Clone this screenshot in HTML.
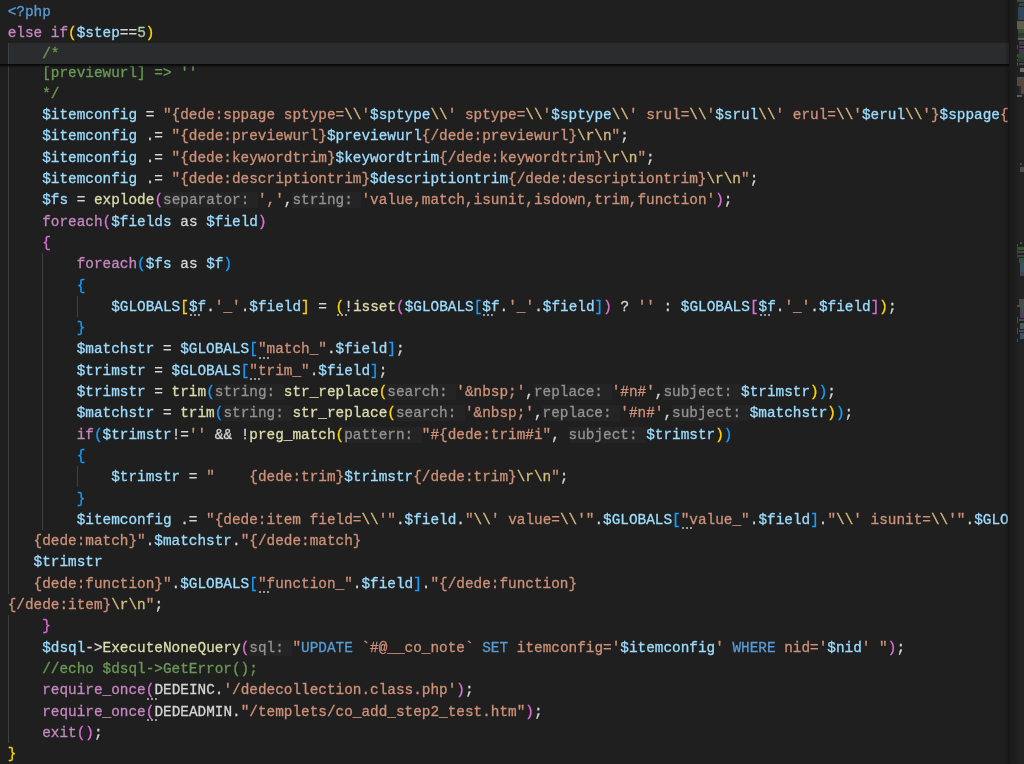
<!DOCTYPE html>
<html><head><meta charset="utf-8"><style>
*{margin:0;padding:0;box-sizing:border-box}
html,body{width:1024px;height:764px;overflow:hidden;background:#1f1f1f}
#ed{position:absolute;left:0;top:0;width:1009px;height:764px;overflow:hidden;background:#1f1f1f;filter:blur(0.35px)}
.l{position:absolute;left:7.7px;height:21.3px;line-height:21.3px;white-space:pre;font-family:"Liberation Mono",monospace;font-size:14.38px;color:#d4d4d4;padding-top:1px;-webkit-text-stroke:0.3px currentColor}
.k{color:#c586c0}.v{color:#9cdcfe}.f{color:#dcdcaa}.s{color:#ce9178}.c{color:#6a9955}.o{color:#d4d4d4}
.t{color:#569cd6}.n{color:#b5cea8}.e{color:#d7ba7d}.b1{color:#ffd700}.b2{color:#da70d6}.b3{color:#179fff}
.h{color:#929292;background:#242424}
.g{position:absolute;width:1px;height:21.3px;background:#404040}
.d{position:absolute;width:12px;height:2px;background:radial-gradient(circle at 2px 1px,#9a9a9a 1px,transparent 1.2px) 0 0/4px 2px repeat-x}
.sw{position:absolute;left:0;top:0;width:1009px;height:63.900000000000006px;background:#1f1f1f}
.hov{position:absolute;left:8px;top:42.6px;width:1001px;height:21.3px;background:#2b2c2e}
.shadow{position:absolute;left:0;top:63.900000000000006px;width:1009px;height:4px;background:linear-gradient(#070707 0,#0c0c0c 1.2px,rgba(15,15,15,0.5) 2.2px,rgba(31,31,31,0) 4px)}
#sb{position:absolute;left:1004px;top:0;width:6px;height:764px;background:linear-gradient(to right,rgba(0,0,0,0),rgba(0,0,0,0.12) 40%,rgba(0,0,0,0.3))}
#mm{position:absolute;left:1010px;top:0;width:14px;height:764px;background:linear-gradient(to right,#1c1c1c 0,#1d1d1d 6px,#212121 7px);filter:blur(0.6px)}
</style></head><body>
<div id="ed">
<div class="g" style="left:8px;top:61.50px;height:532.50px"></div>
<div class="g" style="left:8px;top:615.30px;height:127.80px"></div>
<div class="g" style="left:42px;top:253.20px;height:276.90px"></div>
<div class="g" style="left:77px;top:295.80px;height:21.30px"></div>
<div class="g" style="left:77px;top:466.20px;height:21.30px"></div>
<div class="l" style="top:61.50px"><span class="c">    [previewurl] =&gt; ''</span></div>
<div class="l" style="top:82.80px"><span class="c">    */</span></div>
<div class="l" style="top:104.10px"><span class="o">    </span><span class="v">$itemconfig</span><span class="o"> = </span><span class="s">"{dede:sppage sptype=</span><span class="e">\\</span><span class="s">'</span><span class="v">$sptype</span><span class="e">\\</span><span class="s">' sptype=</span><span class="e">\\</span><span class="s">'</span><span class="v">$sptype</span><span class="e">\\</span><span class="s">' srul=</span><span class="e">\\</span><span class="s">'</span><span class="v">$srul</span><span class="e">\\</span><span class="s">' erul=</span><span class="e">\\</span><span class="s">'</span><span class="v">$erul</span><span class="e">\\</span><span class="s">'}</span><span class="v">$sppage</span><span class="s">{dede:sppage}</span></div>
<div class="l" style="top:125.40px"><span class="o">    </span><span class="v">$itemconfig</span><span class="o"> .= </span><span class="s">"{dede:previewurl}</span><span class="v">$previewurl</span><span class="s">{/dede:previewurl}</span><span class="e">\r\n</span><span class="s">"</span><span class="o">;</span></div>
<div class="l" style="top:146.70px"><span class="o">    </span><span class="v">$itemconfig</span><span class="o"> .= </span><span class="s">"{dede:keywordtrim}</span><span class="v">$keywordtrim</span><span class="s">{/dede:keywordtrim}</span><span class="e">\r\n</span><span class="s">"</span><span class="o">;</span></div>
<div class="l" style="top:168.00px"><span class="o">    </span><span class="v">$itemconfig</span><span class="o"> .= </span><span class="s">"{dede:descriptiontrim}</span><span class="v">$descriptiontrim</span><span class="s">{/dede:descriptiontrim}</span><span class="e">\r\n</span><span class="s">"</span><span class="o">;</span></div>
<div class="l" style="top:189.30px"><span class="o">    </span><span class="v">$fs</span><span class="o"> = </span><span class="f">explode</span><span class="b2">(</span><span class="h">separator: </span><span class="s">','</span><span class="o">,</span><span class="h">string: </span><span class="s">'value,match,isunit,isdown,trim,function'</span><span class="b2">)</span><span class="o">;</span></div>
<div class="l" style="top:210.60px"><span class="o">    </span><span class="k">foreach</span><span class="b2">(</span><span class="v">$fields</span><span class="o"> as </span><span class="v">$field</span><span class="b2">)</span></div>
<div class="l" style="top:231.90px"><span class="o">    </span><span class="b2">{</span></div>
<div class="l" style="top:253.20px"><span class="o">        </span><span class="k">foreach</span><span class="b3">(</span><span class="v">$fs</span><span class="o"> as </span><span class="v">$f</span><span class="b3">)</span></div>
<div class="l" style="top:274.50px"><span class="o">        </span><span class="b3">{</span></div>
<div class="l" style="top:295.80px"><span class="o">            </span><span class="v">$GLOBALS</span><span class="b1">[</span><span class="v">$f</span><span class="o">.</span><span class="s">'_'</span><span class="o">.</span><span class="v">$field</span><span class="b1">]</span><span class="o"> = </span><span class="b1">(</span><span class="o">!</span><span class="f">isset</span><span class="b2">(</span><span class="v">$GLOBALS</span><span class="b3">[</span><span class="v">$f</span><span class="o">.</span><span class="s">'_'</span><span class="o">.</span><span class="v">$field</span><span class="b3">]</span><span class="b2">)</span><span class="o"> ? </span><span class="s">''</span><span class="o"> : </span><span class="v">$GLOBALS</span><span class="b2">[</span><span class="v">$f</span><span class="o">.</span><span class="s">'_'</span><span class="o">.</span><span class="v">$field</span><span class="b2">]</span><span class="b1">)</span><span class="o">;</span></div>
<div class="l" style="top:317.10px"><span class="o">        </span><span class="b3">}</span></div>
<div class="l" style="top:338.40px"><span class="o">        </span><span class="v">$matchstr</span><span class="o"> = </span><span class="v">$GLOBALS</span><span class="b3">[</span><span class="s">"match_"</span><span class="o">.</span><span class="v">$field</span><span class="b3">]</span><span class="o">;</span></div>
<div class="l" style="top:359.70px"><span class="o">        </span><span class="v">$trimstr</span><span class="o"> = </span><span class="v">$GLOBALS</span><span class="b3">[</span><span class="s">"trim_"</span><span class="o">.</span><span class="v">$field</span><span class="b3">]</span><span class="o">;</span></div>
<div class="l" style="top:381.00px"><span class="o">        </span><span class="v">$trimstr</span><span class="o"> = </span><span class="f">trim</span><span class="b3">(</span><span class="h">string: </span><span class="f">str_replace</span><span class="b1">(</span><span class="h">search: </span><span class="s">'&amp;nbsp;'</span><span class="o">,</span><span class="h">replace: </span><span class="s">'#n#'</span><span class="o">,</span><span class="h">subject: </span><span class="v">$trimstr</span><span class="b1">)</span><span class="b3">)</span><span class="o">;</span></div>
<div class="l" style="top:402.30px"><span class="o">        </span><span class="v">$matchstr</span><span class="o"> = </span><span class="f">trim</span><span class="b3">(</span><span class="h">string: </span><span class="f">str_replace</span><span class="b1">(</span><span class="h">search: </span><span class="s">'&amp;nbsp;'</span><span class="o">,</span><span class="h">replace: </span><span class="s">'#n#'</span><span class="o">,</span><span class="h">subject: </span><span class="v">$matchstr</span><span class="b1">)</span><span class="b3">)</span><span class="o">;</span></div>
<div class="l" style="top:423.60px"><span class="o">        </span><span class="k">if</span><span class="b3">(</span><span class="v">$trimstr</span><span class="o">!=</span><span class="s">''</span><span class="o"> &amp;&amp; !</span><span class="f">preg_match</span><span class="b1">(</span><span class="h">pattern: </span><span class="s">"#{dede:trim#i"</span><span class="o">, </span><span class="h">subject: </span><span class="v">$trimstr</span><span class="b1">)</span><span class="b3">)</span></div>
<div class="l" style="top:444.90px"><span class="o">        </span><span class="b3">{</span></div>
<div class="l" style="top:466.20px"><span class="o">            </span><span class="v">$trimstr</span><span class="o"> = </span><span class="s">"    {dede:trim}</span><span class="v">$trimstr</span><span class="s">{/dede:trim}</span><span class="e">\r\n</span><span class="s">"</span><span class="o">;</span></div>
<div class="l" style="top:487.50px"><span class="o">        </span><span class="b3">}</span></div>
<div class="l" style="top:508.80px"><span class="o">        </span><span class="v">$itemconfig</span><span class="o"> .= </span><span class="s">"{dede:item field=</span><span class="e">\\</span><span class="s">'"</span><span class="o">.</span><span class="v">$field</span><span class="o">.</span><span class="s">"</span><span class="e">\\</span><span class="s">' value=</span><span class="e">\\</span><span class="s">'"</span><span class="o">.</span><span class="v">$GLOBALS</span><span class="b3">[</span><span class="s">"value_"</span><span class="o">.</span><span class="v">$field</span><span class="b3">]</span><span class="o">.</span><span class="s">"</span><span class="e">\\</span><span class="s">' isunit=</span><span class="e">\\</span><span class="s">'"</span><span class="o">.</span><span class="v">$GLOBALS</span><span class="b3">[</span><span class="s">"isunit_"</span></div>
<div class="l" style="top:530.10px"><span class="s">   {dede:match}"</span><span class="o">.</span><span class="v">$matchstr</span><span class="o">.</span><span class="s">"{/dede:match}</span></div>
<div class="l" style="top:551.40px"><span class="s">   </span><span class="v">$trimstr</span></div>
<div class="l" style="top:572.70px"><span class="s">   {dede:function}"</span><span class="o">.</span><span class="v">$GLOBALS</span><span class="b3">[</span><span class="s">"function_"</span><span class="o">.</span><span class="v">$field</span><span class="b3">]</span><span class="o">.</span><span class="s">"{/dede:function}</span></div>
<div class="l" style="top:594.00px"><span class="s">{/dede:item}</span><span class="e">\r\n</span><span class="s">"</span><span class="o">;</span></div>
<div class="l" style="top:615.30px"><span class="o">    </span><span class="b2">}</span></div>
<div class="l" style="top:636.60px"><span class="o">    </span><span class="v">$dsql</span><span class="o">-&gt;</span><span class="f">ExecuteNoneQuery</span><span class="b2">(</span><span class="h">sql: </span><span class="s">"</span><span class="t">UPDATE</span><span class="s"> `#@__co_note` </span><span class="t">SET</span><span class="s"> itemconfig='</span><span class="v">$itemconfig</span><span class="s">' </span><span class="t">WHERE</span><span class="s"> nid='</span><span class="v">$nid</span><span class="s">' "</span><span class="b2">)</span><span class="o">;</span></div>
<div class="l" style="top:657.90px"><span class="c">    //echo $dsql-&gt;GetError();</span></div>
<div class="l" style="top:679.20px"><span class="o">    </span><span class="k">require_once</span><span class="b2">(</span><span class="o">DEDEINC.</span><span class="s">'/dedecollection.class.php'</span><span class="b2">)</span><span class="o">;</span></div>
<div class="l" style="top:700.50px"><span class="o">    </span><span class="k">require_once</span><span class="b2">(</span><span class="o">DEDEADMIN.</span><span class="s">"/templets/co_add_step2_test.htm"</span><span class="b2">)</span><span class="o">;</span></div>
<div class="l" style="top:721.80px"><span class="o">    </span><span class="k">exit</span><span class="b2">(</span><span class="b2">)</span><span class="o">;</span></div>
<div class="l" style="top:743.10px"><span class="b1">}</span></div>
<div class="d" style="left:188.93px;top:314.10px"></div>
<div class="d" style="left:335.64px;top:314.10px"></div>
<div class="d" style="left:482.35px;top:314.10px"></div>
<div class="d" style="left:758.51px;top:314.10px"></div>
<div class="d" style="left:257.97px;top:356.70px"></div>
<div class="d" style="left:249.34px;top:378.00px"></div>
<div class="d" style="left:680.84px;top:527.10px"></div>
<div class="d" style="left:257.97px;top:591.00px"></div>
<div class="d" style="left:145.78px;top:697.50px"></div>
<div class="d" style="left:145.78px;top:718.80px"></div>
<div class="sw">
<div class="hov"></div>
<div class="g" style="left:8.20px;top:42.60px;height:21.3px"></div>
<div class="l" style="top:0.80px"><span class="t">&lt;?php</span></div>
<div class="l" style="top:22.10px"><span class="k">else if</span><span class="b1">(</span><span class="v">$step</span><span class="o">==</span><span class="n">5</span><span class="b1">)</span></div>
<div class="l" style="top:43.40px"><span class="c">    /*</span></div>
</div><div class="shadow"></div>
</div>
<div id="sb"></div>
<div id="mm"><div style="position:absolute;left:7px;top:0px;width:7px;height:2px;background:#3e4852"></div><div style="position:absolute;left:9px;top:3px;width:5px;height:3px;background:#34483a"></div><div style="position:absolute;left:8px;top:7px;width:6px;height:13px;background:#30455a"></div><div style="position:absolute;left:7px;top:21px;width:7px;height:8px;background:#5e5c4e"></div><div style="position:absolute;left:8px;top:29px;width:6px;height:4px;background:#37503a"></div><div style="position:absolute;left:8px;top:33px;width:6px;height:3px;background:#2e3a30"></div><div style="position:absolute;left:8px;top:36px;width:6px;height:2px;background:#34423a"></div><div style="position:absolute;left:8px;top:38px;width:6px;height:2px;background:#5a6450"></div><div style="position:absolute;left:9px;top:41px;width:5px;height:4px;background:#3e3848"></div><div style="position:absolute;left:9px;top:46px;width:5px;height:2px;background:#4e3e50"></div><div style="position:absolute;left:9px;top:49px;width:5px;height:5px;background:#443456"></div><div style="position:absolute;left:8px;top:54px;width:6px;height:4px;background:#30452f"></div><div style="position:absolute;left:8px;top:58px;width:6px;height:4px;background:#2c3a2c"></div><div style="position:absolute;left:9px;top:63px;width:5px;height:2px;background:#4a3e50"></div><div style="position:absolute;left:10px;top:68px;width:4px;height:4px;background:#6a6a6a"></div><div style="position:absolute;left:7px;top:45px;width:1px;height:4px;background:#4a4a4a"></div><div style="position:absolute;left:7px;top:54px;width:1px;height:3px;background:#4a4a4a"></div><div style="position:absolute;left:7px;top:59px;width:1px;height:2px;background:#4a4a4a"></div><div style="position:absolute;left:7px;top:62px;width:1px;height:4px;background:#4a4a4a"></div><div style="position:absolute;left:7px;top:77px;width:7px;height:2px;background:#4e4e4e"></div><div style="position:absolute;left:7px;top:79px;width:7px;height:7px;background:#54483e"></div><div style="position:absolute;left:11px;top:86px;width:3px;height:8px;background:#56463c"></div><div style="position:absolute;left:9px;top:86px;width:2px;height:8px;background:#2e2838"></div><div style="position:absolute;left:7px;top:95px;width:5px;height:2px;background:#5e5e5e"></div><div style="position:absolute;left:10px;top:163px;width:2px;height:2px;background:#4a4a4a"></div><div style="position:absolute;left:10px;top:167px;width:4px;height:5px;background:#4a5046"></div><div style="position:absolute;left:10px;top:242px;width:2px;height:2px;background:#4e4e4e"></div><div style="position:absolute;left:7px;top:244px;width:1px;height:2px;background:#4e4e4e"></div><div style="position:absolute;left:7px;top:246px;width:1px;height:12px;background:#3e3e3e"></div><div style="position:absolute;left:8px;top:247px;width:6px;height:3px;background:#3a5038"></div><div style="position:absolute;left:8px;top:251px;width:6px;height:2px;background:#3a5038"></div><div style="position:absolute;left:7px;top:255px;width:7px;height:2px;background:#463e4a"></div><div style="position:absolute;left:9px;top:258px;width:5px;height:5px;background:#34503a"></div><div style="position:absolute;left:10px;top:263px;width:4px;height:9px;background:#3a5060"></div><div style="position:absolute;left:10px;top:272px;width:4px;height:4px;background:#443e50"></div><div style="position:absolute;left:9px;top:299px;width:5px;height:2px;background:#5a4636"></div><div style="position:absolute;left:9px;top:301px;width:5px;height:4px;background:#3e4a5a"></div><div style="position:absolute;left:7px;top:305px;width:7px;height:2px;background:#5a4636"></div><div style="position:absolute;left:10px;top:307px;width:4px;height:5px;background:#345050"></div><div style="position:absolute;left:10px;top:312px;width:4px;height:6px;background:#4e3e5a"></div><div style="position:absolute;left:7px;top:317px;width:1px;height:6px;background:#4a4a4a"></div><div style="position:absolute;left:9px;top:319px;width:5px;height:2px;background:#484856"></div><div style="position:absolute;left:10px;top:323px;width:4px;height:6px;background:#465a5a"></div><div style="position:absolute;left:7px;top:328px;width:1px;height:6px;background:#4a4a4a"></div><div style="position:absolute;left:9px;top:330px;width:5px;height:2px;background:#484856"></div><div style="position:absolute;left:10px;top:333px;width:4px;height:6px;background:#3a5068"></div><div style="position:absolute;left:7px;top:339px;width:1px;height:3px;background:#4e4e4e"></div></div>
</body></html>
